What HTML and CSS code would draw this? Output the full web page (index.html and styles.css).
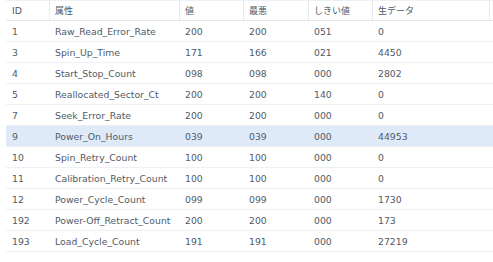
FILE: index.html
```html
<!DOCTYPE html>
<html lang="ja">
<head>
<meta charset="utf-8">
<link rel="stylesheet" href="styles.css">
</head>
<body>
<div class="smart">
  <div class="row head">
    <div class="cell">ID</div>
    <div class="cell">属性</div>
    <div class="cell">値</div>
    <div class="cell">最悪</div>
    <div class="cell">しきい値</div>
    <div class="cell">生データ</div>
    <div class="cell"></div>
  </div>
  <div class="row"><div class="cell">1</div><div class="cell">Raw_Read_Error_Rate</div><div class="cell">200</div><div class="cell">200</div><div class="cell">051</div><div class="cell">0</div><div class="cell"></div></div>
  <div class="row"><div class="cell">3</div><div class="cell">Spin_Up_Time</div><div class="cell">171</div><div class="cell">166</div><div class="cell">021</div><div class="cell">4450</div><div class="cell"></div></div>
  <div class="row"><div class="cell">4</div><div class="cell">Start_Stop_Count</div><div class="cell">098</div><div class="cell">098</div><div class="cell">000</div><div class="cell">2802</div><div class="cell"></div></div>
  <div class="row"><div class="cell">5</div><div class="cell">Reallocated_Sector_Ct</div><div class="cell">200</div><div class="cell">200</div><div class="cell">140</div><div class="cell">0</div><div class="cell"></div></div>
  <div class="row"><div class="cell">7</div><div class="cell">Seek_Error_Rate</div><div class="cell">200</div><div class="cell">200</div><div class="cell">000</div><div class="cell">0</div><div class="cell"></div></div>
  <div class="row selected"><div class="cell">9</div><div class="cell">Power_On_Hours</div><div class="cell">039</div><div class="cell">039</div><div class="cell">000</div><div class="cell">44953</div><div class="cell"></div></div>
  <div class="row"><div class="cell">10</div><div class="cell">Spin_Retry_Count</div><div class="cell">100</div><div class="cell">100</div><div class="cell">000</div><div class="cell">0</div><div class="cell"></div></div>
  <div class="row"><div class="cell">11</div><div class="cell">Calibration_Retry_Count</div><div class="cell">100</div><div class="cell">100</div><div class="cell">000</div><div class="cell">0</div><div class="cell"></div></div>
  <div class="row"><div class="cell">12</div><div class="cell">Power_Cycle_Count</div><div class="cell">099</div><div class="cell">099</div><div class="cell">000</div><div class="cell">1730</div><div class="cell"></div></div>
  <div class="row"><div class="cell">192</div><div class="cell">Power-Off_Retract_Count</div><div class="cell">200</div><div class="cell">200</div><div class="cell">000</div><div class="cell">173</div><div class="cell"></div></div>
  <div class="row"><div class="cell">193</div><div class="cell">Load_Cycle_Count</div><div class="cell">191</div><div class="cell">191</div><div class="cell">000</div><div class="cell">27219</div><div class="cell"></div></div>
</div>
</body>
</html>
```
FILE: styles.css
```css
html, body {
  margin: 0;
  padding: 0;
  background: #ffffff;
}
body {
  font-family: "DejaVu Sans", "Noto Sans CJK JP", sans-serif;
  font-size: 9.3px;
  color: #505a66;
}
.smart {
  margin-left: 6px;
  width: 487px;
}
.row {
  display: grid;
  grid-template-columns: 43px 130px 64px 65px 64px 117px 4px;
  height: 21px;
  box-sizing: border-box;
  border-bottom: 1px solid #eef1f4;
}
.row.head {
  border-top: 1px solid #eef1f4;
  border-bottom: 1px solid #e3e8ee;
  height: 21px;
}
.row.selected {
  background: #dfeaf8;
}
.cell {
  display: flex;
  align-items: center;
  padding-left: 6px;
  white-space: nowrap;
  overflow: hidden;
}
.head .cell {
  font-family: "Noto Sans CJK JP", "DejaVu Sans", sans-serif;
  font-size: 9px;
}
.head .cell + .cell {
  border-left: 1px solid #e6eaef;
  padding-left: 5px;
}
.head .cell:first-child {
  font-family: "DejaVu Sans", sans-serif;
  font-size: 9.3px;
}
```
